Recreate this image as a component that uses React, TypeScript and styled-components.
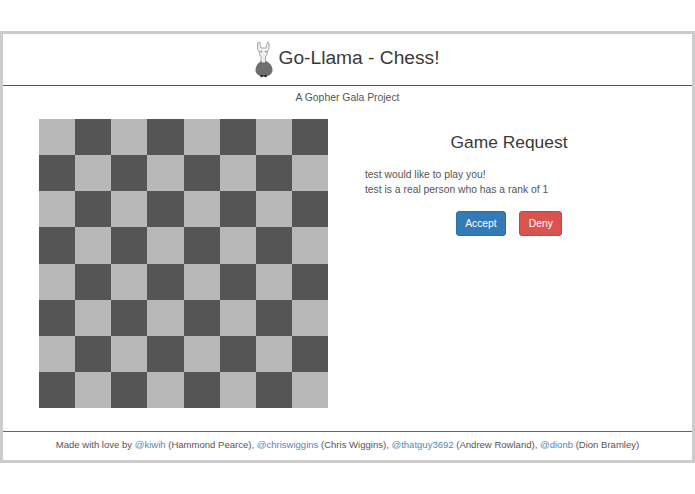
import styled, { createGlobalStyle } from 'styled-components';

const SQUARES = Array.from({ length: 64 }, (_, i) => (Math.floor(i / 8) + i) % 2 === 1);

const CREDITS = [
  { handle: '@kiwih', name: 'Hammond Pearce' },
  { handle: '@chriswiggins', name: 'Chris Wiggins' },
  { handle: '@thatguy3692', name: 'Andrew Rowland' },
  { handle: '@dionb', name: 'Dion Bramley' },
];

function Llama() {
  return (
    <svg width="18" height="37" viewBox="0 0 18 37">
      <path
        d="M4.500 1l1.500 6h5l1.500-6 1.500 1v6l-1.500 2-.5 4-1.500 1v9H6v-9l-1.500-1-.5-4L2.500 8V2z"
        fill="#eeeeee"
        stroke="#a8a8a8"
        strokeWidth="1"
      />
      <path d="M5.500 10h1.200v1.200H5.500zM10.300 10h1.200v1.200h-1.200z" fill="#555555" />
      <path d="M6 20c0 2 5 2 5 0 4 2 6.500 5 6.500 9 0 4-3.500 6.500-8.500 6.500S.5 33 .5 29c0-4 2.500-7 5.500-9z" fill="#6e6e6e" />
      <path d="M5.500 33.500l3 1.200 3-1.200v3l-3-1.200-3 1.200z" fill="#222222" />
    </svg>
  );
}

export default function App() {
  return (
    <>
      <GlobalStyle />
      <Frame>
        <Header>
          <Llama />
          <Title>Go-Llama - Chess!</Title>
        </Header>
        <Subtitle>A Gopher Gala Project</Subtitle>
        <Main>
          <Board>
            {SQUARES.map((dark, i) => (
              <Square key={i} $dark={dark} />
            ))}
          </Board>
          <Panel>
            <Heading>Game Request</Heading>
            <Message>
              test would like to play you!
              <br />
              test is a real person who has a rank of 1
            </Message>
            <Actions>
              <Button $bg="#337ab7" $border="#2e6da4">Accept</Button>
              <Button $bg="#d9534f" $border="#d43f3a">Deny</Button>
            </Actions>
          </Panel>
        </Main>
        <Footer>
          Made with love by{' '}
          {CREDITS.map((c, i) => (
            <span key={c.handle}>
              <Credit href="#">{c.handle}</Credit> ({c.name}){i < CREDITS.length - 1 ? ', ' : ''}
            </span>
          ))}
        </Footer>
      </Frame>
    </>
  );
}

const GlobalStyle = createGlobalStyle`
  html, body {
    margin: 0;
    background: #ffffff;
  }
  * {
    box-sizing: border-box;
  }
`;

const Frame = styled.div`
  width: 695px;
  height: 432px;
  margin-top: 31px;
  border: 3px solid #cccccc;
  display: flex;
  flex-direction: column;
  font-family: 'Liberation Sans', Arial, sans-serif;
  color: #555555;
  background: #ffffff;
`;

const Header = styled.header`
  height: 52px;
  flex: none;
  border-bottom: 1px solid #555555;
  display: flex;
  align-items: center;
  justify-content: center;
  gap: 5px;
`;

const Title = styled.h1`
  margin: 0 0 3px;
  font-size: 19.200px;
  font-weight: 400;
  line-height: 1.1;
  color: #3a3a3a;
`;

const Subtitle = styled.p`
  margin: 0;
  height: 33px;
  flex: none;
  padding-top: 4px;
  font-size: 10.400px;
  line-height: 15px;
  text-align: center;
`;

const Main = styled.main`
  flex: 1;
  display: flex;
  padding-left: 36px;
`;

const Board = styled.div`
  width: 289px;
  height: 289px;
  display: grid;
  grid-template-columns: repeat(8, 1fr);
  grid-template-rows: repeat(8, 1fr);
`;

const Square = styled.div<{ $dark: boolean }>`
  background: ${props => (props.$dark ? '#555555' : '#b8b8b8')};
`;

const Panel = styled.section`
  width: 288px;
  margin-left: 37px;
`;

const Heading = styled.h3`
  margin: 12px 0 0;
  font-size: 17.400px;
  font-weight: 400;
  line-height: 22px;
  text-align: center;
  color: #3a3a3a;
`;

const Message = styled.p`
  margin: 14px 0 0;
  font-size: 10.330px;
  line-height: 15px;
`;

const Actions = styled.div`
  display: flex;
  justify-content: center;
  gap: 13px;
  margin-top: 14px;
`;

const Button = styled.button<{ $bg: string; $border: string }>`
  height: 25px;
  padding: 0 8.500px;
  background: ${props => props.$bg};
  border: 1px solid ${props => props.$border};
  border-radius: 3px;
  color: #ffffff;
  font-family: inherit;
  font-size: 10.330px;
`;

const Footer = styled.footer`
  height: 29px;
  flex: none;
  border-top: 1px solid #666666;
  font-size: 9.540px;
  line-height: 25px;
  text-align: center;
  white-space: nowrap;
`;

const Credit = styled.a`
  color: #5a87b3;
  text-decoration: none;
`;
